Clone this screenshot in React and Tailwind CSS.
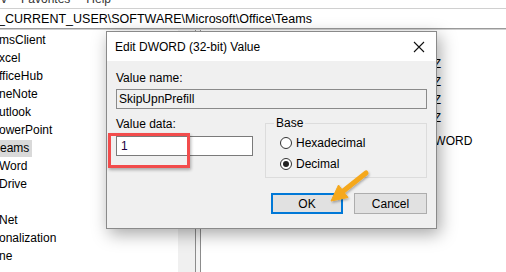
import React from "react";

const tree = [
  { t: "msClient" },
  { t: "xcel" },
  { t: "fficeHub" },
  { t: "neNote" },
  { t: "utlook" },
  { t: "owerPoint" },
  { t: "eams", sel: true },
  { t: "Word" },
  { t: "Drive" },
  { t: "" },
  { t: "Net" },
  { t: "onalization" },
  { t: "ne" },
];

export default function App() {
  return (
    <div className="relative w-[506px] h-[272px] overflow-hidden bg-white text-[12px] leading-[14px] text-black font-['Liberation_Sans',Arial,sans-serif]">
      {/* menu bar (cut off) */}
      <div className="h-[8px] overflow-hidden">
        <div className="flex -mt-[8px] text-[#333] h-[14px]">
          <span className="ml-[1px]">v</span>
          <span className="ml-[14px]">Favorites</span>
          <span className="ml-[16px]">Help</span>
        </div>
      </div>
      {/* address bar */}
      <div className="h-[21px] border-t border-[#d0d0d0] border-b border-b-[#9a9a9a] flex items-center">
        <span className="text-[12.5px] -ml-[2px] whitespace-nowrap">_CURRENT_USER\SOFTWARE\Microsoft\Office\Teams</span>
      </div>
      <div className="h-[1px] bg-[#cfcfcf]" />
      {/* panes */}
      <div className="flex h-[242px]">
        <div className="w-[178px] pt-[1px]">
          {tree.map((r, i) => (
            <div key={i} className="h-[18px] flex items-center">
              <span className={r.sel ? "bg-[#d9d9d9] h-[17px] flex items-center pr-[3px] -ml-[1px] pl-[1px]" : "-ml-[1px]"}>{r.t}</span>
            </div>
          ))}
        </div>
        <div className="w-[17px] bg-[#f0f0f0]" />
        <div className="w-[6px] border-l border-r border-[#8c8c8c] bg-[#f4f4f4]" />
        <div className="flex-1 pt-[25px] pl-[192px]">
          <div className="h-[18px] flex items-center">REG_SZ</div>
          <div className="h-[18px] flex items-center">REG_SZ</div>
          <div className="h-[18px] flex items-center">REG_SZ</div>
          <div className="h-[18px] flex items-center">REG_SZ</div>
          <div className="h-[18px] flex items-center mt-[5px]">REG_DWORD</div>
        </div>
      </div>

      {/* dialog */}
      <div className="absolute left-[106px] top-[31px] w-[331px] h-[198px] border border-[#8a8a8a] bg-[#f0f0f0] shadow-[3px_5px_16px_rgba(0,0,0,0.35)] flex flex-col">
        <div className="h-[29px] bg-white flex items-center justify-between pl-[8px] pr-[9px]">
          <span className="text-[12px]">Edit DWORD (32-bit) Value</span>
          <svg width="12" height="12" viewBox="0 0 12 12" className="mr-[2px]">
            <path d="M1 1 L11 11 M11 1 L1 11" stroke="#111" strokeWidth="1.1" />
          </svg>
        </div>
        <div className="flex-1 pl-[9px] pr-[9px] pt-[10px]">
          <div className="h-[14px]">Value name:</div>
          <div className="mt-[4px] h-[20px] border border-[#8a8a8a] bg-[#f0f0f0] flex items-center pl-[2px]">SkipUpnPrefill</div>
          <div className="flex mt-[8px]">
            <div className="w-[137px]">
              <div className="h-[14px]">Value data:</div>
              <div className="mt-[5px] h-[20px] border border-[#7a7a7a] bg-white flex items-center pl-[4px] text-[#200040]">1</div>
            </div>
            <fieldset className="ml-[12px] w-[162px] h-[62px] border border-[#dcdcdc] px-[14px] pt-[5px] -mt-[1px]">
              <legend className="ml-[-6px] px-[2px] h-[14px] leading-[14px]">Base</legend>
              <div className="flex items-center h-[16px]">
                <span className="w-[12px] h-[12px] rounded-full border border-[#333] bg-white" />
                <span className="ml-[4px]">Hexadecimal</span>
              </div>
              <div className="flex items-center h-[16px] mt-[5px]">
                <span className="w-[12px] h-[12px] rounded-full border border-[#333] bg-white flex items-center justify-center">
                  <span className="w-[6px] h-[6px] rounded-full bg-[#222]" />
                </span>
                <span className="ml-[4px]">Decimal</span>
              </div>
            </fieldset>
          </div>
          <div className="flex justify-end gap-[11px] mt-[15px] pr-[0px]">
            <div className="w-[72px] h-[21px] border-2 border-[#0078d7] bg-[#e1e1e1] flex items-center justify-center">OK</div>
            <div className="w-[73px] h-[21px] border border-[#adadad] bg-[#e1e1e1] flex items-center justify-center">Cancel</div>
          </div>
        </div>
      </div>

      {/* red highlight */}
      <div className="absolute left-[108px] top-[133px] w-[82px] h-[35px] border-[3px] border-[#f24c4c] shadow-[1px_2px_3px_rgba(0,0,0,0.3)]" />

      {/* orange arrow */}
      <svg className="absolute left-[325px] top-[165px]" width="50" height="42" viewBox="0 0 50 42">
        <defs>
          <filter id="sh" x="-20%" y="-20%" width="140%" height="140%">
            <feDropShadow dx="1" dy="1.5" stdDeviation="1" floodColor="#000" floodOpacity="0.3" />
          </filter>
        </defs>
        <g filter="url(#sh)" fill="#f5a81c" stroke="#f5a81c">
          <line x1="41" y1="8" x2="18" y2="26.3" strokeWidth="5" strokeLinecap="round" />
          <polygon points="6,36 23,32.5 13.5,20" strokeWidth="1" strokeLinejoin="round" />
        </g>
      </svg>
    </div>
  );
}
